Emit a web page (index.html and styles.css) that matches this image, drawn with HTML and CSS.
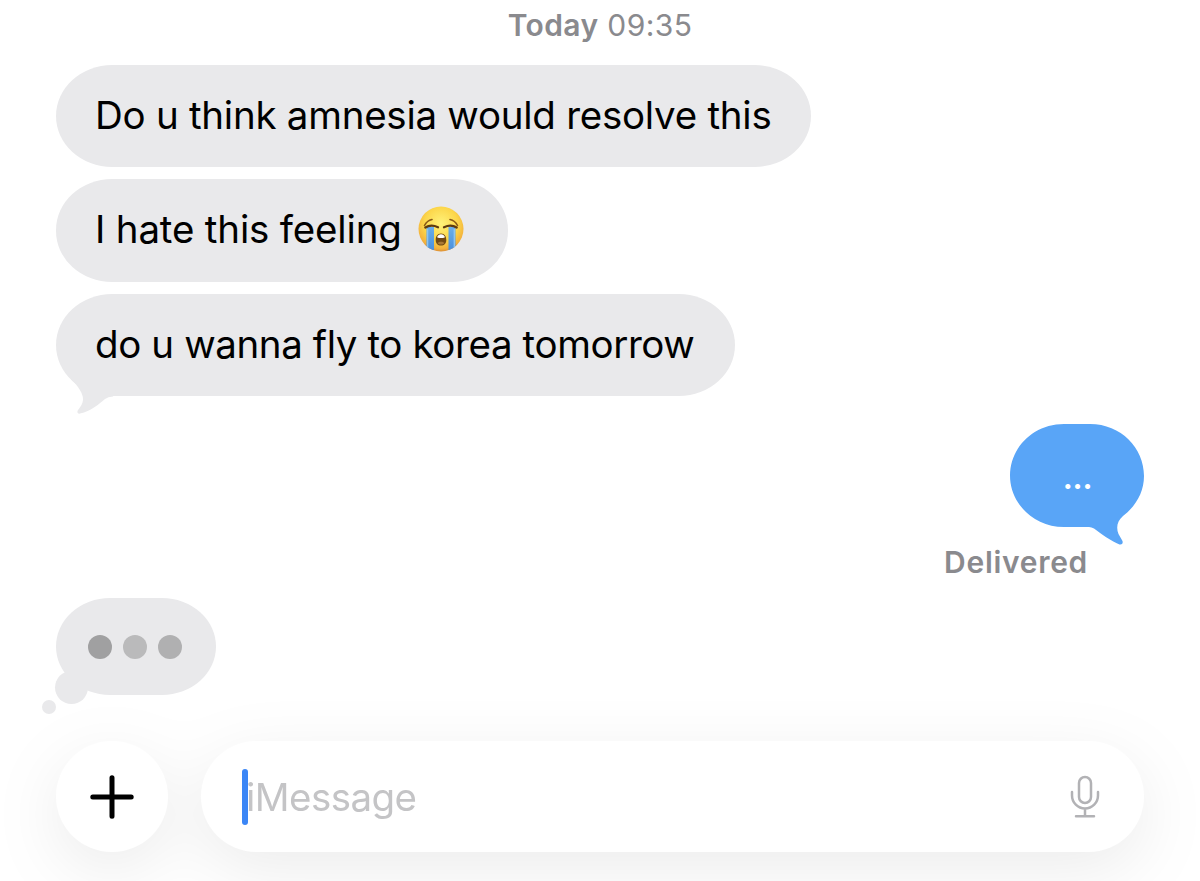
FILE: index.html
```html
<!DOCTYPE html>
<html lang="en">
<head>
    <meta charset="UTF-8">
    <meta name="viewport" content="width=device-width, initial-scale=1.0">
    <title>Messages</title>
    <link rel="stylesheet" href="styles.css">
</head>
<body>
    <main class="chat">
        <div class="timestamp"><strong>Today</strong> 09:35</div>

        <div class="messages">
            <div class="bubble amnesia"><span>Do u think amnesia would resolve this</span></div>
            <div class="bubble feeling">
                <span>I hate this feeling</span>
                <svg class="emoji" viewBox="0 0 46 46">
                    <defs>
                        <radialGradient id="face" cx="50%" cy="38%" r="62%">
                            <stop offset="0" stop-color="#fff27a"/>
                            <stop offset="0.6" stop-color="#fcd64a"/>
                            <stop offset="0.9" stop-color="#f2b03c"/>
                            <stop offset="1" stop-color="#dc8f35"/>
                        </radialGradient>
                        <linearGradient id="tear" x1="0" x2="0" y1="0" y2="1">
                            <stop offset="0" stop-color="#6aaeea"/>
                            <stop offset="1" stop-color="#4b90dc"/>
                        </linearGradient>
                        <clipPath id="head"><circle cx="23" cy="23" r="22.5"/></clipPath>
                    </defs>
                    <circle cx="23" cy="23" r="22.5" fill="url(#face)"/>
                    <g clip-path="url(#head)">
                        <path d="M8.5 21h7.5v23H8.5zM30.5 21h7v23h-7z" fill="url(#tear)"/>
                        <path d="M9.6 23v20M36.3 23v20" stroke="#8cc4f2" stroke-width="1.4"/>
                    </g>
                    <path d="M6.5 19.5Q9 14.5 14 13.5M32 13.5Q37 14.5 39.5 19.5" fill="none" stroke="#8a5a16" stroke-width="1.6" stroke-linecap="round"/>
                    <path d="M7.3 21.5Q13 18 20 21.2M26 21.2Q33 18 38.7 21.5" fill="none" stroke="#5e3b10" stroke-width="2.3" stroke-linecap="round"/>
                    <path d="M23 27.5c3.7 0 5.3 3 5.3 6.4 0 3.4-2 5.6-5.3 5.6s-5.3-2.2-5.3-5.6c0-3.4 1.6-6.4 5.3-6.4z" fill="#724a13"/>
                    <path d="M19 31.2c.8-2 2.2-3 4-3s3.2 1 4 3c-2.5 1.2-5.5 1.2-8 0z" fill="#fff"/>
                    <path d="M19.5 37c1.8-1.8 5.2-1.8 7 0-1.8 2-5.2 2-7 0z" fill="#a87835"/>
                </svg>
            </div>
            <div class="bubble korea">
                <span>do u wanna fly to korea tomorrow</span>
                <svg class="tail" viewBox="0 0 50 36">
                    <path d="M0 0C8 8 12 15 12 20C12 25 9 28 6.500 32Q6 35 9 34.600C20 32 28 25 34 20Q37 17.500 42 17.500L50 0z"/>
                </svg>
            </div>
        </div>

        <div class="sent">
            <div class="reply">
                <svg class="reply-shape" viewBox="0 0 134 121">
                    <path d="M54 0H80C111 0 134 24 134 52C134 68 126 82 113 92C107 97 106 104 108.500 110L112.500 117Q113.500 121 109.500 120.500C101 117 91 110 84 104.500Q81.500 103 79 103H54C23 103 0 79 0 51.500C0 24 23 0 54 0z"/>
                </svg>
                <span class="reply-text">...</span>
            </div>
            <div class="delivered">Delivered</div>
        </div>

        <div class="typing">
            <i class="dot dark"></i>
            <i class="dot light"></i>
            <i class="dot"></i>
        </div>
    </main>

    <footer class="composer">
        <button class="add" aria-label="Add">
            <svg width="44" height="44" viewBox="0 0 44 44">
                <path d="M22 2.800v38.400M2.800 22h38.400"/>
            </svg>
        </button>
        <div class="field">
            <i class="caret"></i>
            <span class="placeholder">iMessage</span>
            <svg class="mic" width="28" height="42" viewBox="0 0 28 42">
                <rect x="8" y="1" width="12" height="26" rx="6"/>
                <path d="M1 16v3.500a13 13 0 0 0 26 0V16M14 32.500V40M5 40.300h18"/>
            </svg>
        </div>
    </footer>
</body>
</html>
```
FILE: styles.css
```css
* {
    box-sizing: border-box;
}
body {
    display: flex;
    flex-direction: column;
    height: 881px;
    margin: 0;
    overflow: hidden;
    background: #fff;
    color: #000;
    font-family: Inter, "Liberation Sans", sans-serif;
}
.chat {
    height: 741px;
    padding: 6px 56px 0;
}
.timestamp {
    height: 58px;
    color: #8a8a8e;
    font-size: 30px;
    letter-spacing: 0.4px;
    line-height: 39px;
    text-align: center;
    white-space: nowrap;
}
.timestamp strong {
    font-weight: 600;
}
.messages {
    display: flex;
    flex-direction: column;
    align-items: flex-start;
    gap: 12px;
    padding-top: 0.5px;
}
.bubble {
    display: flex;
    position: relative;
    align-items: center;
    height: 102.5px;
    padding: 0 0 2px 39px;
    border-radius: 56px / 51px;
    background: #e9e9eb;
    font-size: 38.5px;
    white-space: nowrap;
}
.amnesia {
    width: 755px;
    letter-spacing: -0.26px;
}
.feeling {
    width: 452px;
    letter-spacing: -0.17px;
}
.korea {
    width: 679px;
    letter-spacing: -0.39px;
}
.emoji {
    width: 46px;
    height: 46px;
    margin-left: 16px;
}
.tail {
    position: absolute;
    left: 15px;
    top: 85px;
    width: 50px;
    height: 36px;
    fill: #e9e9eb;
}
.sent {
    display: flex;
    flex-direction: column;
    align-items: flex-end;
    margin-top: 28px;
}
.reply {
    display: grid;
    width: 134px;
    height: 121px;
}
.reply-shape,
.reply-text {
    grid-area: 1 / 1;
}
.reply-shape {
    fill: #59a5f7;
}
.reply-text {
    color: #fff;
    font-size: 38.5px;
    letter-spacing: -1.2px;
    line-height: 102px;
    text-align: center;
}
.delivered {
    height: 53px;
    margin-right: 56px;
    color: #8a8a8e;
    font-size: 30px;
    font-weight: 600;
    letter-spacing: 0.7px;
    line-height: 35px;
}
.typing {
    display: flex;
    position: relative;
    align-items: center;
    gap: 11px;
    width: 160px;
    height: 97px;
    padding-left: 32px;
    border-radius: 54px / 48.5px;
    background: #e9e9eb;
}
.typing::before,
.typing::after {
    content: "";
    position: absolute;
    border-radius: 50%;
    background: #e9e9eb;
}
.typing::before {
    left: -1px;
    top: 73px;
    width: 33px;
    height: 33px;
}
.typing::after {
    left: -14px;
    top: 102px;
    width: 14px;
    height: 14px;
}
.dot {
    width: 24px;
    height: 24px;
    border-radius: 50%;
    background: #b0b0b1;
}
.dot.dark {
    background: #a0a0a1;
}
.dot.light {
    background: #bababb;
}
/* one shadow for both controls, so neither one shades the other */
.composer {
    display: flex;
    gap: 33px;
    height: 140px;
    padding: 0 56px;
    filter: drop-shadow(0 18px 32px rgba(0, 0, 0, 0.075));
}
.add,
.field {
    display: flex;
    align-items: center;
    height: 111px;
    background: #fff;
}
.add {
    justify-content: center;
    width: 112px;
    padding: 0;
    border: 0;
    border-radius: 50%;
}
.add path {
    stroke: #000;
    stroke-width: 5;
    stroke-linecap: round;
}
.field {
    flex: 1;
    padding: 0 45px 0 41px;
    border-radius: 56px;
}
.caret {
    z-index: 1;
    width: 6px;
    height: 56px;
    margin-right: -2px;
    border-radius: 3px;
    background: #3b86f6;
}
.placeholder {
    color: #c4c4c6;
    font-size: 38.5px;
    letter-spacing: -0.55px;
}
.mic {
    margin-left: auto;
    fill: none;
    stroke: #b2b2b5;
    stroke-width: 2.5;
    stroke-linecap: round;
    overflow: visible;
}
```
